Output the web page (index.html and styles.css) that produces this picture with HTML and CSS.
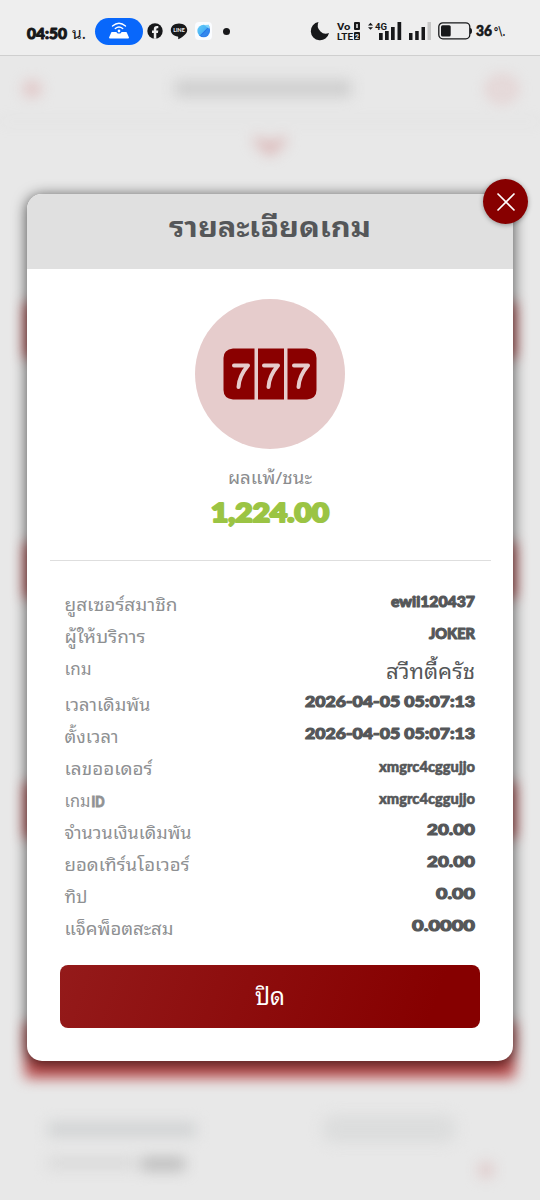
FILE: index.html
```html
<!DOCTYPE html>
<html lang="th">
<head>
<meta charset="utf-8">
<title>รายละเอียดเกม</title>
<link rel="stylesheet" href="styles.css">
</head>
<body>
<div class="screen">
  <header class="status">
    <svg class="clock" width="68" height="20" viewBox="0 0 68 20"><text class="time" x="0" y="15.500" textLength="40" lengthAdjust="spacingAndGlyphs">04:50</text><text class="unit" x="45" y="16" textLength="14" lengthAdjust="spacingAndGlyphs">น.</text></svg>
    <span class="hotspot"><svg width="22" height="18" viewBox="0 0 22 18"><g fill="none" stroke="#fff" stroke-width="1.400" stroke-linecap="round"><path d="M4.500 4Q11-1.500 17.500 4M7.300 6.500Q11 3.500 14.700 6.500"/></g><path d="M3.500 10H18.500L21 15.500Q21 16.500 20 16.500H2Q1 16.500 1 15.500Z" fill="#fff"/><circle cx="11" cy="9" r="2" fill="#fff" stroke="#0867fb" stroke-width="1.200"/></svg></span>
    <svg class="fb" width="16" height="16" viewBox="0 0 16 16"><circle cx="8" cy="8" r="7.700" fill="#17181a"/><path d="M6.800 15.800V10H5V7.500H6.800V6Q6.800 3 9.800 3H11.300V5.300H10.300Q9.300 5.300 9.300 6.400V7.500H11.300L10.900 10H9.300V15.800Z" fill="#eee"/></svg>
    <svg class="line" width="18" height="17" viewBox="0 0 18 17"><path d="M9 .5C4.300.5.8 3.300.8 7S4 13 7.600 13.400C8.500 13.600 8.200 14.500 8.200 16.200C11 15 17.200 11.500 17.200 7C17.200 3.300 13.700.5 9 .5Z" fill="#17181a"/><text x="9" y="9" class="line-text" textLength="11.500" lengthAdjust="spacingAndGlyphs">LINE</text></svg>
    <svg class="app" width="17" height="18" viewBox="0 0 17 18"><defs><linearGradient id="globe" x1="0" y1="0" x2="1" y2="1"><stop offset="0" stop-color="#64cdf8"/><stop offset=".5" stop-color="#49b2f5"/><stop offset=".55" stop-color="#2878e8"/><stop offset="1" stop-color="#3c8df0"/></linearGradient></defs><rect width="17" height="18" rx="4" fill="#fafcff"/><circle cx="8.700" cy="9" r="6.300" fill="url(#globe)"/><path d="M3.500 14Q8 14 14.500 4Q15 10 10 14Z" fill="#3488ed"/><path d="M9 3l5-.3.3 4z" fill="#80d4fa"/></svg>
    <i class="dot"></i>
    <svg class="moon" width="20" height="20" viewBox="0 0 20 20"><path d="M8.500 1A9.200 9.200 0 1 0 19 12Q14 14 10.500 10.500Q6 6 8.500 1Z" fill="#17181a"/></svg>
    <svg class="volte" width="25" height="20" viewBox="0 0 25 20"><text class="net" x="0" y="8.500" textLength="13.500" lengthAdjust="spacingAndGlyphs">Vo</text><text class="net" x="0" y="19" textLength="16" lengthAdjust="spacingAndGlyphs">LTE</text><rect x="17" y="1" width="6" height="8" rx="1" fill="#17181a"/><path d="M20 3V7" stroke="#eee" stroke-width="1.500"/><rect x="17" y="11" width="6" height="8" rx="1" fill="#17181a"/><text class="sim" x="20" y="17.500">2</text></svg>
    <svg class="signals" width="66" height="20" viewBox="0 0 66 20"><path d="M1 4.500L3.500 1.800L6 4.500ZM1 6.200H6L3.500 8.800Z" fill="#17181a"/><text class="net" x="8" y="8.500" textLength="12" lengthAdjust="spacingAndGlyphs">4G</text><path d="M12 12h3.700v7H12zM18 10h3.700v9H18zM24 6h3.700v13H24zM30.500 1h3.700v18h-3.700zM42 12h3.500v7H42zM48.200 10h3.500v9h-3.500zM54.500 6H58v13h-3.500z" fill="#17181a"/><path d="M60.500 1H64v18h-3.500z" fill="#c6c6c6"/></svg>
    <svg class="battery" width="35" height="18" viewBox="0 0 35 18"><rect x=".8" y=".8" width="31" height="16" rx="4" fill="none" stroke="#17181a" stroke-width="1.300"/><rect x="3" y="3.200" width="9.700" height="11.200" rx="1.500" fill="#17181a"/><path d="M32 6Q34 6 34 9T32 12Z" fill="#17181a"/></svg>
    <svg class="charge" width="30" height="18" viewBox="0 0 30 18"><text class="pct" x="0" y="13.500" textLength="16" lengthAdjust="spacingAndGlyphs">36</text><text class="pct-sign" x="18" y="13.500" textLength="11" lengthAdjust="spacingAndGlyphs">°\.</text></svg>
  </header>
  <main class="stage">
    <div class="backdrop">
      <div class="nav"><i class="nav-back"></i><i class="nav-title"></i><i class="nav-icon"></i></div>
      <div class="chevron"><i></i></div>
      <div class="list">
        <i class="bar"></i><i class="bar"></i><i class="bar"></i><i class="bar"></i>
      </div>
      <div class="entry"><i class="e-name"></i><i class="e-pill"></i></div>
      <div class="entry second"><i class="e-label"></i><i class="e-value"></i><i class="e-mark"></i></div>
    </div>
    <section class="modal">
      <h1><svg width="204" height="40"><text x="1" y="27" textLength="202" lengthAdjust="spacingAndGlyphs">รายละเอียดเกม</text></svg></h1>
      <div class="summary">
        <div class="badge"><svg width="94" height="52" viewBox="0 0 94 52"><path d="M10 .5H31.500V51.500H10Q.5 50.500.5 42V10Q.5 1.500 10 .5ZM35 .5H61V51.500H35ZM64.500 .5H84Q93.500 1.500 93.500 10V42Q93.500 50.500 84 51.500H64.500Z" fill="#8a0000"/><g fill="none" stroke="#e6cccc" stroke-width="4" stroke-linecap="round" stroke-linejoin="round"><path d="M11 17.500H25Q16 28 15.500 39M41 17.500H55Q46 28 45.500 39M71 17.500H85Q76 28 75.500 39"/></g></svg></div>
        <svg class="result" width="86" height="30"><text x="1" y="21" textLength="84" lengthAdjust="spacingAndGlyphs">ผลแพ้/ชนะ</text></svg>
        <svg class="amount" width="120" height="34"><text x="1" y="26.500" textLength="118" lengthAdjust="spacingAndGlyphs">1,224.00</text></svg>
      </div>
      <hr>
      <dl>
        <div><dt><svg width="140" height="32"><text x="0.500" y="23" textLength="113" lengthAdjust="spacingAndGlyphs">ยูสเซอร์สมาชิก</text></svg></dt><dd><svg width="180" height="32"><text x="95" y="19" textLength="84" lengthAdjust="spacingAndGlyphs">ewii120437</text></svg></dd></div>
        <div><dt><svg width="140" height="32"><text x="0.500" y="23" textLength="81" lengthAdjust="spacingAndGlyphs">ผู้ให้บริการ</text></svg></dt><dd><svg width="180" height="32"><text x="133" y="19" textLength="46" lengthAdjust="spacingAndGlyphs">JOKER</text></svg></dd></div>
        <div class="tall"><dt><svg width="140" height="32"><text x="0.500" y="23" textLength="27" lengthAdjust="spacingAndGlyphs">เกม</text></svg></dt><dd><svg width="180" height="36"><text class="thai" x="90" y="27" textLength="89" lengthAdjust="spacingAndGlyphs">สวีทตี้ครัช</text></svg></dd></div>
        <div><dt><svg width="140" height="32"><text x="0.500" y="23" textLength="86" lengthAdjust="spacingAndGlyphs">เวลาเดิมพัน</text></svg></dt><dd><svg width="180" height="32"><text x="9" y="19" textLength="170" lengthAdjust="spacingAndGlyphs">2026-04-05 05:07:13</text></svg></dd></div>
        <div><dt><svg width="140" height="32"><text x="0.500" y="23" textLength="54" lengthAdjust="spacingAndGlyphs">ตั้งเวลา</text></svg></dt><dd><svg width="180" height="32"><text x="9" y="19" textLength="170" lengthAdjust="spacingAndGlyphs">2026-04-05 05:07:13</text></svg></dd></div>
        <div><dt><svg width="140" height="32"><text x="0.500" y="23" textLength="88" lengthAdjust="spacingAndGlyphs">เลขออเดอร์</text></svg></dt><dd><svg width="180" height="32"><text class="code" x="83" y="20" textLength="96" lengthAdjust="spacingAndGlyphs">xmgrc4cggujjo</text></svg></dd></div>
        <div><dt><svg width="140" height="32"><text x="0.500" y="23" textLength="26" lengthAdjust="spacingAndGlyphs">เกม</text><text class="id" x="27.500" y="23" textLength="13" lengthAdjust="spacingAndGlyphs">ID</text></svg></dt><dd><svg width="180" height="32"><text class="code" x="83" y="20" textLength="96" lengthAdjust="spacingAndGlyphs">xmgrc4cggujjo</text></svg></dd></div>
        <div><dt><svg width="140" height="32"><text x="0.500" y="23" textLength="127" lengthAdjust="spacingAndGlyphs">จำนวนเงินเดิมพัน</text></svg></dt><dd><svg width="180" height="32"><text x="131" y="19" textLength="48" lengthAdjust="spacingAndGlyphs">20.00</text></svg></dd></div>
        <div><dt><svg width="140" height="32"><text x="0.500" y="23" textLength="125" lengthAdjust="spacingAndGlyphs">ยอดเทิร์นโอเวอร์</text></svg></dt><dd><svg width="180" height="32"><text x="131" y="19" textLength="48" lengthAdjust="spacingAndGlyphs">20.00</text></svg></dd></div>
        <div><dt><svg width="140" height="32"><text x="0.500" y="23" textLength="23" lengthAdjust="spacingAndGlyphs">ทิป</text></svg></dt><dd><svg width="180" height="32"><text x="140" y="19" textLength="39" lengthAdjust="spacingAndGlyphs">0.00</text></svg></dd></div>
        <div><dt><svg width="140" height="32"><text x="0.500" y="23" textLength="109" lengthAdjust="spacingAndGlyphs">แจ็คพ็อตสะสม</text></svg></dt><dd><svg width="180" height="32"><text x="116" y="19" textLength="63" lengthAdjust="spacingAndGlyphs">0.0000</text></svg></dd></div>
      </dl>
      <button class="dismiss"><svg width="34" height="40"><text x="2" y="28" textLength="30" lengthAdjust="spacingAndGlyphs">ปิด</text></svg></button>
      <button class="close" aria-label="ปิด"><svg width="20" height="20"><path d="M1.500 1.500L18.500 18.500M18.500 1.500L1.500 18.500" stroke="#fff" stroke-width="1.600"/></svg></button>
    </section>
  </main>
</div>
</body>
</html>
```
FILE: styles.css
```css
:root { --thai: "Noto Sans Thai Looped", "Noto Looped Thai", Loma, Garuda, Waree, Umpush, "Noto Sans Thai", "Noto Sans", sans-serif; }
* { box-sizing: border-box; }
body { margin: 0; font-family: var(--thai); }
svg { display: block; flex: none; overflow: visible; }
i { display: block; flex: none; }
.screen { width: 540px; height: 1200px; overflow: hidden; background: #e8e8e8; display: flex; flex-direction: column; }
.status { height: 56px; flex: none; background: #eee; border-bottom: 1px solid #cfcfcf; display: flex; align-items: center; padding: 7px 0 0 27px; color: #17181a; }
.clock { margin-top: 3px; }
.time { font: 900 15px Lato, sans-serif; fill: #17181a; stroke: #17181a; stroke-width: 1px; stroke-linejoin: round; }
.unit { font-size: 16px; fill: #17181a; }
.hotspot { width: 48px; height: 27px; border-radius: 14px; background: #0867fb; display: grid; place-items: center; }
.fb { margin-left: 4px; }
.line { margin-left: 7px; }
.app { margin-left: 7px; }
.line-text { font: 900 5.5px Lato, sans-serif; fill: #eee; text-anchor: middle; }
.dot { width: 7px; height: 7px; border-radius: 50%; background: #17181a; margin-left: 11px; }
.moon { margin-left: 80px; }
.volte { margin-left: 7px; }
.signals { margin-left: 5px; }
.battery { margin-left: 5px; }
.charge { margin-left: 3px; }
.net { font: 700 9.6px Roboto, sans-serif; fill: #17181a; }
.sim { font: 700 7px Roboto, sans-serif; fill: #eee; text-anchor: middle; }
.pct { font: 900 14.5px Lato, sans-serif; fill: #17181a; stroke: #17181a; stroke-width: .6px; stroke-linejoin: round; }
.pct-sign { font: 900 14px Lato, sans-serif; fill: #17181a; }
.stage { position: relative; flex: 1; }
.backdrop { height: 1144px; filter: blur(7px); display: flex; flex-direction: column; }
.backdrop > div { flex: none; }
.nav { height: 66px; border-bottom: 1px solid #d4d4d4; display: flex; align-items: center; padding: 0 23px; }
.nav-back { width: 18px; height: 16px; background: #e0c2c2; border-radius: 50%; }
.nav-title { width: 176px; height: 17px; background: #cecece; margin-left: 134px; }
.nav-icon { width: 30px; height: 26px; border: 6px solid #e2c6c6; border-radius: 50%; margin-left: auto; }
.chevron { height: 181px; display: flex; justify-content: center; padding-top: 14px; }
.chevron i { width: 32px; height: 20px; background: #dab2b2; clip-path: polygon(0 0, 50% 35%, 100% 0, 100% 30%, 50% 100%, 0 30%); }
.list { display: grid; gap: 185px; padding: 0 25px; }
.bar { height: 55px; background: #b94c4c; }
.entry { display: flex; align-items: flex-start; padding: 42px 0 0 48px; height: 76px; }
.e-name { width: 148px; height: 15px; margin-top: 2px; background: #d1d3d4; }
.e-pill { width: 134px; height: 28px; margin: -5px 0 0 126px; background: #dcdddd; border-radius: 12px; }
.entry.second { padding-top: 0; height: 46px; }
.e-label { width: 88px; height: 12px; background: #d9d9d9; margin-top: 3px; }
.e-value { width: 44px; height: 14px; background: #bdbdbd; margin: 3px 0 0 5px; }
.e-mark { width: 14px; height: 14px; background: #dfc8c8; margin: 9px 0 0 294px; }
.modal { position: absolute; left: 27px; top: 138px; width: 486px; height: 867px; border-radius: 15px; background: #fff; box-shadow: 0 2px 14px 1px rgba(0,0,0,.62); display: flex; flex-direction: column; }
h1 { margin: 0; height: 75px; background: #e0e0e0; border-radius: 15px 15px 0 0; display: flex; justify-content: center; padding-top: 16px; font-size: 28px; font-weight: 700; fill: #555759; }
.summary { height: 291px; display: flex; flex-direction: column; align-items: center; padding-top: 30px; }
.badge { width: 150px; height: 150px; border-radius: 50%; background: #e6cccc; display: grid; place-items: center; }
.result { margin-top: 14px; font-size: 17px; fill: #8b8c8e; }
.amount { margin-top: 2px; font: 900 26px Lato, sans-serif; fill: #9bc444; stroke: #9bc444; stroke-width: 2.2px; stroke-linejoin: round; }
hr { width: 441px; height: 1px; margin: 0 auto; border: 0; background: #dedede; }
dl { margin: 27px 37px 0; height: 356px; font-size: 17px; fill: #8e9092; }
dl > div { display: flex; justify-content: space-between; height: 32px; }
dl > .tall { height: 36px; }
dt, dd { margin: 0; }
dd { font: 900 15.5px Lato, sans-serif; fill: #555759; }
dd text { stroke: #555759; stroke-width: 1.1px; stroke-linejoin: round; }
dd .code { stroke-width: .6px; }
dd .thai { font: 400 21px var(--thai); stroke: none; }
.id { font: 900 15px Lato, sans-serif; stroke: #949597; stroke-width: 1px; }
.dismiss { border: 0; padding: 0; margin: 21px 33px 0; height: 63px; border-radius: 8px; background: linear-gradient(110deg, #941a1a, #860000 88%); display: grid; place-items: center; font: 400 24px var(--thai); fill: #fff; }
.close { position: absolute; right: -15px; top: -15px; width: 45px; height: 45px; padding: 0; border: 0; border-radius: 50%; background: #870000; box-shadow: 0 1px 5px rgba(0,0,0,.35); display: grid; place-items: center; }
```
